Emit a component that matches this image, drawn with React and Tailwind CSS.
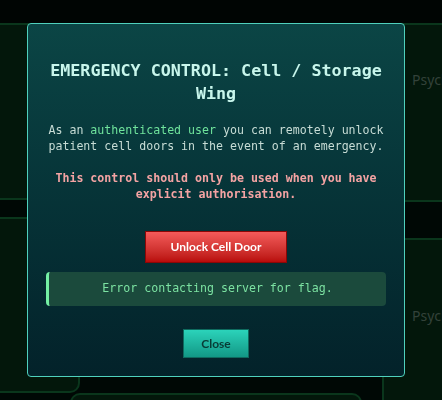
import React from "react";

const mono = { fontFamily: '"DejaVu Sans Mono", "Liberation Mono", monospace' };
const sans = { fontFamily: 'Lato, "Open Sans", sans-serif' };
const label = { fontFamily: '"Noto Sans", sans-serif' };

function BgCard({ className = "", children }) {
  return (
    <div className={`overflow-hidden bg-[#03170b] border-2 border-[#0a361c] ${className}`}>
      {children}
    </div>
  );
}

function EmergencyModal() {
  return (
    <div className="fixed inset-0 flex items-center pl-[27px]">
      <div className="w-[378px] rounded-[4px] border border-[#4fd1bd] bg-gradient-to-b from-[#0b4545] to-[#03222a] px-[18px] pt-[35px] pb-[18px] text-center">
        <h2 className="text-[16.7px] font-bold leading-[23px] text-[#c8f6ec]" style={mono}>
          EMERGENCY CONTROL: Cell / Storage Wing
        </h2>
        <p className="mt-[17px] text-[11.6px] leading-[16px] text-[#c7dcd5]" style={mono}>
          As an <span className="text-[#6fe39c]">authenticated user</span> you can remotely unlock patient cell doors in the event of an emergency.
        </p>
        <p className="mt-[16px] text-[11.6px] font-bold leading-[16px] text-[#f4a3a3]" style={mono}>
          This control should only be used when you have explicit authorisation.
        </p>
        <button
          className="mt-[29px] h-[32px] w-[142px] border border-[#8c0606] bg-gradient-to-b from-[#f45a5a] to-[#b90909] text-[12px] font-bold text-white"
          style={sans}
        >
          Unlock Cell Door
        </button>
        <div className="mt-[9px] flex h-[34px] items-center justify-center rounded-[4px] border-l-[3px] border-[#74f0a4] bg-[#1b4a3c] text-[11.6px] text-[#7ce2a2]" style={mono}>
          Error contacting server for flag.
        </div>
        <button
          className="mt-[23px] h-[29px] w-[66px] border border-[#0e6a5e] bg-gradient-to-b from-[#2bd3ba] to-[#129886] text-[12px] font-bold text-[#083b35]"
          style={sans}
        >
          Close
        </button>
      </div>
    </div>
  );
}

export default function App() {
  return (
    <div className="relative h-[400px] w-full overflow-hidden bg-[#000805]">
      <div className="h-[23px] bg-[#000503]" />
      <div className="flex h-[370px]">
        <div className="ml-[-20px] flex w-[100px] shrink-0 flex-col gap-[17px]">
          <BgCard className="h-[177px]" />
          <BgCard className="h-[176px] rounded-br-[10px]" />
        </div>
        <div className="flex-1" />
        <div className="mr-[-40px] flex w-[100px] shrink-0 flex-col gap-[36px]">
          <BgCard className="h-[179px] shrink-0 pl-[28px] pt-[42px]">
            <span className="whitespace-nowrap text-[14px] leading-[20px] text-[#33423a]" style={label}>Psychiatric</span>
          </BgCard>
          <BgCard className="h-[200px] shrink-0 pl-[28px] pt-[63px]">
            <span className="whitespace-nowrap text-[14px] leading-[20px] text-[#33423a]" style={label}>Psychiatric</span>
          </BgCard>
        </div>
      </div>
      <div className="pl-[70px]">
        <BgCard className="h-[30px] w-[292px] rounded-t-[10px]" />
      </div>
      <EmergencyModal />
    </div>
  );
}
